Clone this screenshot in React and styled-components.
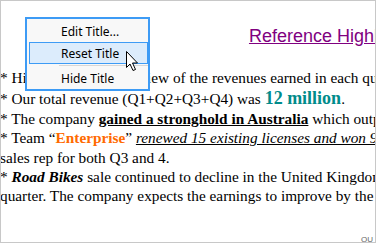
import React from "react";
import styled, { createGlobalStyle } from "styled-components";

const Global = createGlobalStyle`
  html, body { margin: 0; padding: 0; background: #ffffff; }
`;

const Frame = styled.div`
  position: relative;
  box-sizing: border-box;
  width: 376px;
  height: 243px;
  border: 1px solid #c8c8c8;
  overflow: hidden;
  background: #ffffff;
`;

const Page = styled.div`
  width: 665px;
  padding-top: 25px;
  margin-left: -1px;
  color: #000000;
`;

const Title = styled.div`
  font-family: "Liberation Sans", Arial, sans-serif;
  font-size: 18px;
  line-height: 20px;
  text-align: center;
  color: #800080;
  text-decoration: underline;
  margin-bottom: 22px;
`;

const Bullets = styled.div`
  display: flex;
  flex-direction: column;
`;

const Line = styled.div`
  font-family: "Liberation Serif", "Times New Roman", serif;
  font-size: 15.3px;
  line-height: 19.2px;
`;

const Amount = styled.span`
  font-size: 18px;
  line-height: 22px;
  font-weight: bold;
  color: #008b8b;
`;

const Strong = styled.span`
  font-weight: bold;
  text-decoration: underline;
`;

const Team = styled.span`
  font-weight: bold;
  color: #ff6a00;
`;

const Renewed = styled.span`
  font-style: italic;
  text-decoration: underline;
`;

const Product = styled.span`
  font-weight: bold;
  font-style: italic;
`;

const Footer = styled.div`
  margin-top: 30px;
  padding-left: 361px;
  font-family: "Liberation Sans", Arial, sans-serif;
  font-size: 8px;
  line-height: 10px;
  color: #666666;
`;

const Menu = styled.div`
  position: absolute;
  left: 24px;
  top: 16px;
  box-sizing: border-box;
  width: 125px;
  border: 2px solid #3d9bf5;
  background: #f8f8f8;
  padding: 1px 0 0 2px;
  display: flex;
  flex-direction: column;
  font-family: "Noto Sans", "Segoe UI", sans-serif;
  font-size: 12px;
  color: #000000;
`;

const MenuItem = styled.div`
  box-sizing: border-box;
  height: 22px;
  display: flex;
  align-items: center;
  padding-left: 31px;
  border: 1px solid ${(p) => (p.$active ? "#3d9bf5" : "transparent")};
  background: ${(p) => (p.$active ? "#dcecfc" : "transparent")};
`;

const Separator = styled.div`
  height: 1px;
  margin: 1px 0 1px 30px;
  background: #d7d7d7;
`;

const Cursor = styled.svg`
  position: absolute;
  left: 124px;
  top: 49px;
`;

export default function App() {
  return (
    <>
      <Global />
      <Frame>
        <Page>
          <Title>Reference Highlights</Title>
          <Bullets>
            <Line>* Highlights: a brief review of the revenues earned in each quarter.</Line>
            <Line>
              * Our total revenue (Q1+Q2+Q3+Q4) was <Amount>12 million</Amount>.
            </Line>
            <Line>
              * The company <Strong>gained a stronghold in Australia</Strong> which outperformed all other regions.
            </Line>
            <Line>
              * Team “<Team>Enterprise</Team>” <Renewed>renewed 15 existing licenses and won 9 new</Renewed> deals as the best performing
              <br />
              sales rep for both Q3 and 4.
            </Line>
            <Line>
              * <Product>Road Bikes</Product> sale continued to decline in the United Kingdom for the third consecutive
              <br />
              quarter. The company expects the earnings to improve by the end of the year.
            </Line>
          </Bullets>
          <Footer>QU</Footer>
        </Page>
        <Menu>
          <MenuItem>Edit Title...</MenuItem>
          <MenuItem $active>Reset Title</MenuItem>
          <Separator />
          <MenuItem>Hide Title</MenuItem>
        </Menu>
        <Cursor width="14" height="22" viewBox="0 0 14 22">
          <path
            d="M1.5 1.5 L1.5 17.5 L5 14 L8 20.5 L10.5 19.5 L7.5 13 L12.5 13 Z"
            fill="#ffffff"
            stroke="#000000"
            strokeWidth="1"
            strokeLinejoin="miter"
          />
        </Cursor>
      </Frame>
    </>
  );
}
